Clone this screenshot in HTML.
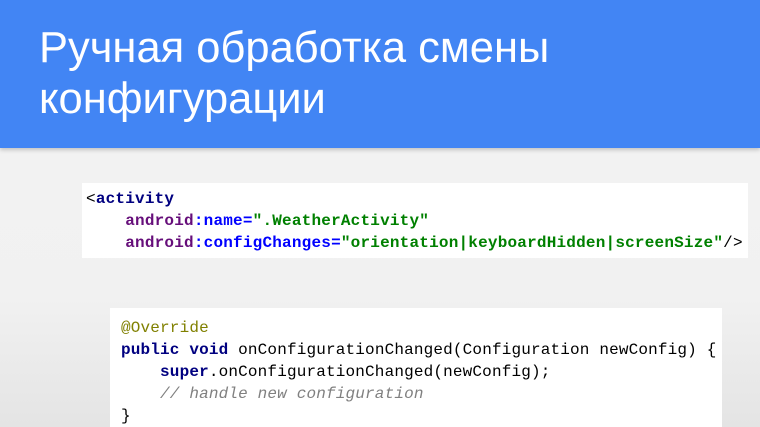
<!DOCTYPE html>
<html><head><meta charset="utf-8"><style>
html,body{margin:0;padding:0}
body{width:760px;height:427px;overflow:hidden;position:relative;background:linear-gradient(#f3f3f3 0%,#f1f1f1 70%,#e4e4e4 100%);font-family:"Liberation Sans",sans-serif}
.hdr{position:absolute;left:0;top:0;width:760px;height:148px;background:#4285f4;box-shadow:0 2px 4px rgba(0,0,0,.2)}
.hdr h1{margin:0;position:absolute;left:39px;top:23px;color:#fff;font-weight:normal;font-size:43.5px;line-height:51px}
.code{position:absolute;background:#fff;font-family:"Liberation Mono",monospace;font-size:16px;line-height:22px;white-space:pre;color:#000;letter-spacing:0.2px}
.c1{left:82px;top:183px;width:666px;height:75px;padding:0;font-weight:bold}
.c1 .in{position:absolute;left:4px;top:5px}
.c2{left:110px;top:308px;width:612px;height:119px;letter-spacing:0.16px}
.c2 .in{position:absolute;left:11px;top:9px}
.n{color:#000080}.a{color:#660e7a}.b{color:#0000ff}.s{color:#008000}.p{font-weight:normal}
.ann{color:#808000}.kw{color:#000080;font-weight:bold}.cm{color:#808080;font-style:italic}
</style></head><body>
<div class="hdr"><h1>Ручная обработка смены<br>конфигурации</h1></div>
<div class="code c1"><div class="in"><span class="p">&lt;</span><span class="n">activity</span>
    <span class="a">android</span><span class="b">:name=</span><span class="s">".WeatherActivity"</span>
    <span class="a">android</span><span class="b">:configChanges=</span><span class="s">"orientation|keyboardHidden|screenSize"</span><span class="p">/&gt;</span></div></div>
<div class="code c2"><div class="in"><span class="ann">@Override</span>
<span class="kw">public void</span> onConfigurationChanged(Configuration newConfig) {
    <span class="kw">super</span>.onConfigurationChanged(newConfig);
    <span class="cm">// handle new configuration</span>
}</div></div>
</body></html>
